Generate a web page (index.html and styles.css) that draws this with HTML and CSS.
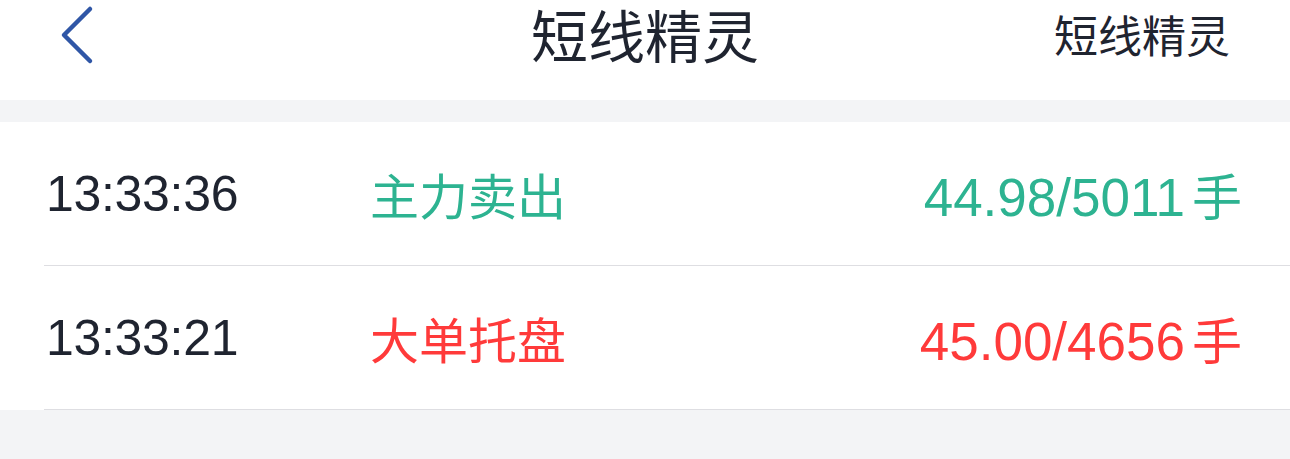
FILE: index.html
```html
<!DOCTYPE html>
<html lang="zh-CN">
<head>
  <meta charset="UTF-8" />
  <meta name="viewport" content="width=device-width, initial-scale=1.0"/>
  <title>短线精灵</title>
  <link rel="stylesheet" href="styles.css">
</head>
<body>

  <header class="topbar">
    <a class="back" href="#">
      <svg width="34" height="60" viewBox="0 0 34 60">
        <polyline points="30,4 4,30 30,56" fill="none" stroke="#2f56a6" stroke-width="4.5" stroke-linecap="round" stroke-linejoin="round"/>
      </svg>
    </a>
    <h1>短线精灵</h1>
    <a class="right-link" href="#">短线精灵</a>
  </header>

  <div class="gap"></div>

  <main class="list">
    <div class="row">
      <span class="time">13:33:36</span>
      <span class="label down">主力卖出</span>
      <span class="value down">44.98/5011<span class="unit">手</span></span>
    </div>
    <div class="row">
      <span class="time">13:33:21</span>
      <span class="label up">大单托盘</span>
      <span class="value up">45.00/4656<span class="unit">手</span></span>
    </div>
  </main>

</body>
</html>
```

FILE: styles.css
```css
body {
  margin: 0;
  font-family: "Liberation Sans", "Noto Sans CJK SC", sans-serif;
  background: #f3f4f6;
  color: #1f2430;
}

.topbar {
  height: 100px;
  background: white;
  display: grid;
  grid-template-columns: 1fr auto 1fr;
  align-items: start;
}

.back {
  display: flex;
  padding-left: 60px;
  padding-top: 5px;
}

.topbar h1 {
  margin: 0;
  padding-top: 3px;
  font-family: "Noto Sans CJK SC", sans-serif;
  font-size: 57px;
  line-height: 60px;
  font-weight: 400;
  color: #1f2430;
}

.right-link {
  justify-self: end;
  margin-right: 60px;
  padding-top: 10px;
  font-family: "Noto Sans CJK SC", sans-serif;
  font-size: 44px;
  line-height: 48px;
  color: #1f2430;
  text-decoration: none;
}

.gap {
  height: 22px;
}

.list {
  background: white;
}

.row {
  display: grid;
  grid-template-columns: 324px 1fr auto;
  align-items: center;
  height: 143px;
  margin-left: 44px;
  padding-left: 2px;
  padding-right: 48px;
  border-bottom: 1px solid #dedee2;
}

.time {
  font-size: 50px;
  letter-spacing: -0.3px;
}

.label {
  font-size: 49px;
}

.value {
  font-size: 53px;
}

.unit {
  font-size: 50px;
  margin-left: 7px;
}

.down {
  color: #2db391;
}

.up {
  color: #ff3a3a;
}
```
